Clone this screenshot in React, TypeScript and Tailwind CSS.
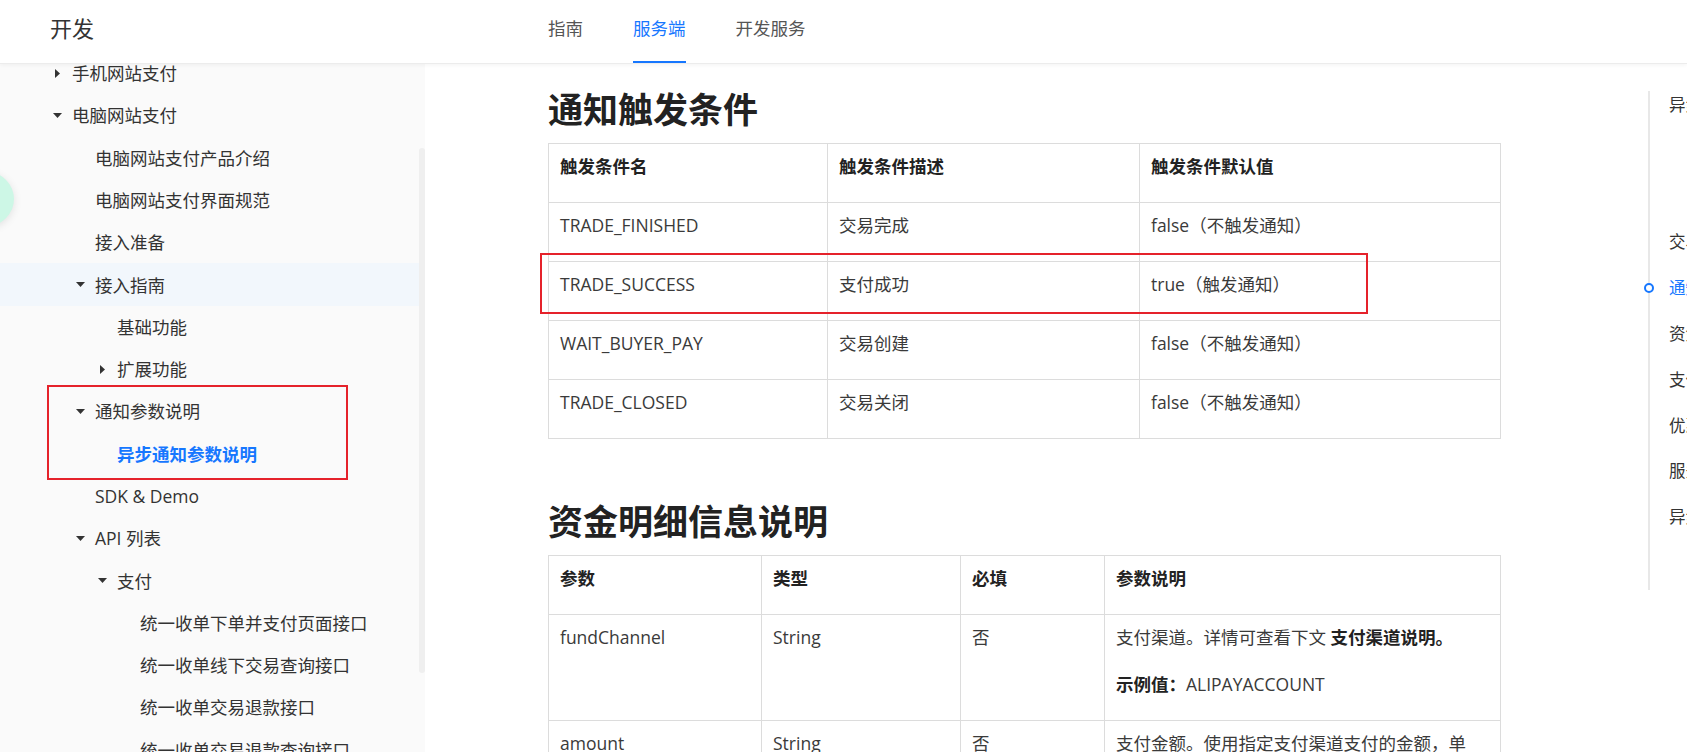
const navItems = [
  { label: "指南", active: false },
  { label: "服务端", active: true },
  { label: "开发服务", active: false },
];

type SideItem = {
  label: string;
  level: number;
  arrow?: "down" | "right";
  hover?: boolean;
  selected?: boolean;
};

const sideItems: SideItem[] = [
  { label: "手机网站支付", level: 1, arrow: "right" },
  { label: "电脑网站支付", level: 1, arrow: "down" },
  { label: "电脑网站支付产品介绍", level: 2 },
  { label: "电脑网站支付界面规范", level: 2 },
  { label: "接入准备", level: 2 },
  { label: "接入指南", level: 2, arrow: "down", hover: true },
  { label: "基础功能", level: 3 },
  { label: "扩展功能", level: 3, arrow: "right" },
  { label: "通知参数说明", level: 2, arrow: "down" },
  { label: "异步通知参数说明", level: 3, selected: true },
  { label: "SDK & Demo", level: 2 },
  { label: "API 列表", level: 2, arrow: "down" },
  { label: "支付", level: 3, arrow: "down" },
  { label: "统一收单下单并支付页面接口", level: 4 },
  { label: "统一收单线下交易查询接口", level: 4 },
  { label: "统一收单交易退款接口", level: 4 },
  { label: "统一收单交易退款查询接口", level: 4 },
];

const indent: Record<number, string> = {
  1: "pl-[50px]",
  2: "pl-[73px]",
  3: "pl-[95px]",
  4: "pl-[118px]",
};

const triggerRows = [
  ["TRADE_FINISHED", "交易完成", "false（不触发通知）"],
  ["TRADE_SUCCESS", "支付成功", "true（触发通知）"],
  ["WAIT_BUYER_PAY", "交易创建", "false（不触发通知）"],
  ["TRADE_CLOSED", "交易关闭", "false（不触发通知）"],
];

const tocItems = [
  { label: "异步通知参数说明", sub: false },
  { label: "通知参数", sub: true },
  { label: "公共参数", sub: true },
  { label: "交易状态说明", sub: false },
  { label: "通知触发条件", sub: false, active: true },
  { label: "资金明细信息说明", sub: false },
  { label: "支付渠道说明", sub: false },
  { label: "优惠券信息说明", sub: false },
  { label: "服务器异步通知页面特性", sub: false },
  { label: "异步返回结果的验签", sub: false },
];

function Arrow({ dir }: { dir: "down" | "right" }) {
  if (dir === "down") {
    return (
      <svg width="9" height="5" viewBox="0 0 9 5" className="ml-[3px]">
        <path d="M0 0h9L4.5 5z" fill="#333" />
      </svg>
    );
  }
  return (
    <svg width="5" height="9" viewBox="0 0 5 9" className="ml-[5px]">
      <path d="M0 0v9l5-4.5z" fill="#333" />
    </svg>
  );
}

function Header() {
  return (
    <header className="relative z-10 flex h-[64px] shrink-0 items-stretch border-b border-[#ececec] bg-white shadow-[0_1px_4px_rgba(0,0,0,0.05)]">
      <div className="flex w-[548px] items-center pb-[6px] pl-[50px] text-[22px] text-[#333]">开发</div>
      <nav className="flex gap-[50px]">
        {navItems.map((n) => (
          <div
            key={n.label}
            className={
              n.active
                ? "flex items-center border-b-2 border-[#1677ff] pb-[6px] pt-[2px] text-[17.5px] text-[#1677ff]"
                : "flex items-center border-b-2 border-transparent pb-[6px] pt-[2px] text-[17.5px] text-[#555]"
            }
          >
            {n.label}
          </div>
        ))}
      </nav>
    </header>
  );
}

function Sidebar() {
  return (
    <aside className="flex h-full w-[425px] shrink-0 overflow-hidden bg-[#fafafa]">
      <ul className="-mt-[12px] flex-1">
        {sideItems.map((it) => (
          <li
            key={it.label}
            className={
              "flex h-[42.3px] items-center text-[17.5px] " +
              indent[it.level] +
              (it.hover ? " bg-[#f2f7fc]" : "") +
              (it.selected ? " font-bold text-[#1677ff]" : " text-[#333]")
            }
          >
            <span className="flex w-[22px] shrink-0 items-center">
              {it.arrow && <Arrow dir={it.arrow} />}
            </span>
            <span className="whitespace-nowrap">{it.label}</span>
          </li>
        ))}
      </ul>
      <div className="w-[6px] shrink-0">
        <div className="mt-[84px] h-[525px] rounded-full bg-[#efefef]" />
      </div>
    </aside>
  );
}

function Cell({ children, head }: { children: React.ReactNode; head?: boolean }) {
  return (
    <td
      className={
        "border border-[#dcdcdc] pl-[11px] pr-[20px] pt-[11px] align-top " +
        (head ? "font-bold text-[#222]" : "text-[#3a3a3a]")
      }
    >
      {children}
    </td>
  );
}

function P({ children }: { children: React.ReactNode }) {
  return <p className="mb-[25px] leading-[22px]">{children}</p>;
}

function Content() {
  return (
    <main className="min-w-0 flex-1 pl-[123px] text-[17.5px]">
      <h2 className="mb-[9px] mt-[22px] text-[35px] font-bold leading-[48px] text-[#222]">通知触发条件</h2>
      <table className="w-[953px] table-fixed border-collapse">
        <colgroup>
          <col className="w-[279px]" />
          <col className="w-[312px]" />
          <col />
        </colgroup>
        <tbody>
          <tr>
            <Cell head><P>触发条件名</P></Cell>
            <Cell head><P>触发条件描述</P></Cell>
            <Cell head><P>触发条件默认值</P></Cell>
          </tr>
          {triggerRows.map((r) => (
            <tr key={r[0]}>
              {r.map((c) => (
                <Cell key={c}><P>{c}</P></Cell>
              ))}
            </tr>
          ))}
        </tbody>
      </table>

      <h2 className="mb-[9px] mt-[59px] text-[35px] font-bold leading-[48px] text-[#222]">资金明细信息说明</h2>
      <table className="w-[953px] table-fixed border-collapse">
        <colgroup>
          <col className="w-[213px]" />
          <col className="w-[199px]" />
          <col className="w-[144px]" />
          <col />
        </colgroup>
        <tbody>
          <tr>
            <Cell head><P>参数</P></Cell>
            <Cell head><P>类型</P></Cell>
            <Cell head><P>必填</P></Cell>
            <Cell head><P>参数说明</P></Cell>
          </tr>
          <tr>
            <Cell><P>fundChannel</P></Cell>
            <Cell><P>String</P></Cell>
            <Cell><P>否</P></Cell>
            <Cell>
              <P>
                支付渠道。详情可查看下文 <b className="text-[#222]">支付渠道说明。</b>
              </P>
              <P>
                <b className="text-[#222]">示例值：</b>ALIPAYACCOUNT
              </P>
            </Cell>
          </tr>
          <tr>
            <Cell><P>amount</P></Cell>
            <Cell><P>String</P></Cell>
            <Cell><P>否</P></Cell>
            <Cell><P>支付金额。使用指定支付渠道支付的金额，单位为元，精确到小数点后两位。</P></Cell>
          </tr>
        </tbody>
      </table>
    </main>
  );
}

function Toc() {
  return (
    <nav className="mt-[27px] h-[499px] w-[39px] shrink-0 border-l-2 border-[#e8e8e8] text-[16.5px]">
      <ul className="flex flex-col gap-[17.8px]">
        {tocItems.map((t) => (
          <li
            key={t.label}
            className={
              "relative h-[28px] whitespace-nowrap leading-[28px] " +
              (t.sub ? "pl-[44px]" : "pl-[19px]") +
              (t.active ? " text-[#1677ff]" : " text-[#333]")
            }
          >
            {t.active && (
              <span className="absolute left-[-6px] top-1/2 h-[10px] w-[10px] -translate-y-1/2 rounded-full border-2 border-[#1677ff] bg-white" />
            )}
            {t.label}
          </li>
        ))}
      </ul>
    </nav>
  );
}

export default function App() {
  return (
    <div className="relative flex h-[752px] w-[1687px] flex-col overflow-hidden bg-white font-['Open_Sans','Noto_Sans_CJK_SC',sans-serif]">
      <Header />
      <div className="flex min-h-0 flex-1">
        <Sidebar />
        <Content />
        <Toc />
      </div>

      {/* floating helper bubble at the left edge */}
      <div className="absolute left-[-40px] top-[172px] h-[54px] w-[54px] rounded-full bg-[#cdf7e6] shadow-[0_2px_8px_rgba(0,0,0,0.1)]" />

      {/* red annotation boxes */}
      <div className="pointer-events-none absolute left-[47px] top-[385px] h-[95px] w-[301px] border-2 border-[#e5222b]" />
      <div className="pointer-events-none absolute left-[540px] top-[253px] h-[61px] w-[828px] border-2 border-[#e5222b]" />
    </div>
  );
}
